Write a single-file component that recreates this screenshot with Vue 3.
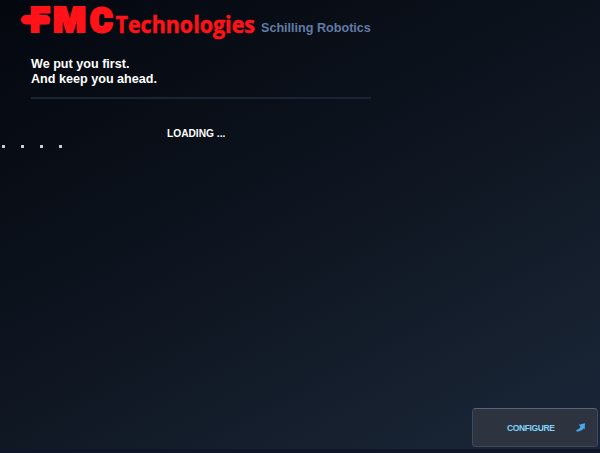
<script setup>
const dots = 4
</script>

<template>
  <main class="screen">
    <header class="brand">
      <svg class="logo" width="260" height="48" viewBox="0 0 260 48" role="img" aria-label="FMC Technologies">
        <rect x="21" y="15" width="29.5" height="9.4" rx="4.7" />
        <text class="fmc" x="30 53 90.3" y="32.2">FM<tspan class="c">C</tspan></text>
        <text class="tech" x="115.5" y="33" textLength="139.5" lengthAdjust="spacingAndGlyphs">Technologies</text>
      </svg>
      <span class="division">Schilling Robotics</span>
    </header>
    <p class="slogan">We put you first.<br>And keep you ahead.</p>
    <div class="rule"></div>
    <p class="loading">LOADING ...</p>
    <div class="dots"><i v-for="n in dots" :key="n"></i></div>
    <footer class="actions">
      <button class="configure" type="button">
        <span>CONFIGURE</span>
        <svg width="10" height="9" viewBox="0 0 10 9"><path d="M2.8 1.8 L9 .3 L8.7 6.6 L7.4 5.6 C6 7.9 3.4 8.8 .3 8.2 L.5 6.8 C2.7 6.6 3.8 5.6 4.4 3.5 Z" /></svg>
      </button>
    </footer>
  </main>
</template>

<style>
body { margin: 0; background: #05080f; }
</style>

<style scoped>
.screen {
  box-sizing: border-box;
  width: 600px;
  height: 453px;
  overflow: hidden;
  display: flex;
  flex-direction: column;
  border-bottom: 4px solid #0f1628;
  background: linear-gradient(152deg, #04070e 0%, #090e17 27%, #101824 58%, #182333 88%, #19253a 100%);
  font-family: "Liberation Sans", Arial, sans-serif;
  font-weight: bold;
}
.brand { display: flex; height: 42px; flex: none; }
.logo { flex: none; overflow: visible; fill: #ff1218; }
.fmc { font: 900 34.5px Inter, sans-serif; stroke: #ff1218; stroke-width: 1.8px; }
.fmc .c { font: 900 33.5px Roboto, sans-serif; stroke-width: 3px; }
.tech { font: 700 23px "Open Sans", sans-serif; stroke: #ff1218; stroke-width: .5px; }
.division {
  margin: 21px 0 0 1px;
  font-size: 12.6px;
  line-height: 15px;
  color: #617ba5;
  white-space: nowrap;
}
.slogan { margin: 15px 0 0 31px; font-size: 12.6px; line-height: 14.5px; color: #fff; flex: none; }
.rule { flex: none; width: 340px; height: 2px; margin: 11px 0 0 31px; background: #1b2433; }
.loading { flex: none; margin: 29px 0 0 167px; font-size: 10.2px; line-height: 12px; color: #fff; }
.dots { flex: none; display: flex; gap: 16px; margin: 5px 0 0 2px; }
.dots i { width: 3px; height: 3px; background: #c9cbcf; }
.actions { display: flex; justify-content: flex-end; margin: auto 2px 2px 0; }
.configure {
  box-sizing: border-box;
  width: 126px;
  height: 39px;
  padding: 0 11px 0 34px;
  display: flex;
  align-items: center;
  justify-content: space-between;
  border: 1px solid #3b4a61;
  border-top-color: #56657a;
  border-radius: 4px;
  background: #2d343f;
  color: #82d3fa;
  font: bold 8.5px "Liberation Sans", Arial, sans-serif;
  letter-spacing: -.4px;
}
.configure svg { fill: #49a7eb; }
</style>
